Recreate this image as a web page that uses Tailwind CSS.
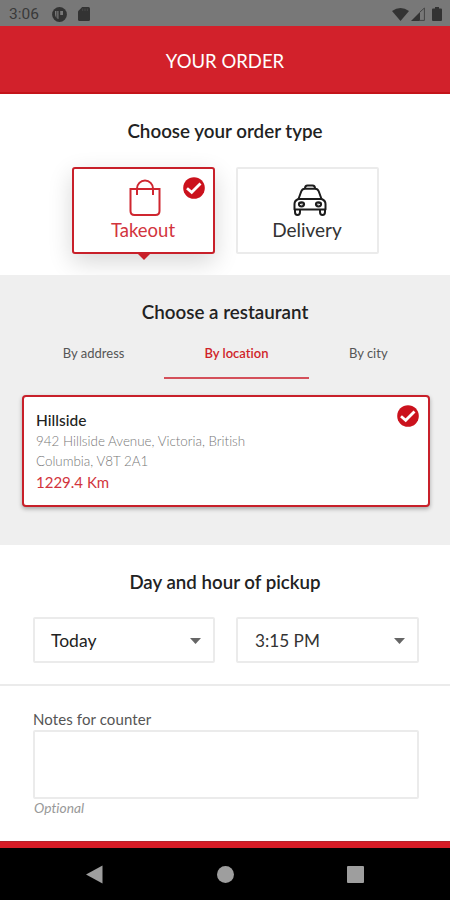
<!DOCTYPE html>
<html lang="en">
<head>
    <meta charset="UTF-8">
    <meta name="viewport" content="width=device-width, initial-scale=1.0">
    <title>Your order</title>
    <script src="https://cdn.jsdelivr.net/npm/@tailwindcss/browser@4"></script>
</head>
<body class="bg-white">

    <div class="w-[450px] h-[900px] flex flex-col overflow-hidden font-['Lato',sans-serif] text-[#222] [font-variant-ligatures:none]">

        <!-- status bar -->
        <div class="h-[26px] shrink-0 bg-[#787878] flex items-center pl-[9px] pr-[8px] pt-[2px] text-[#3a3a3a]">
            <span class="font-['Roboto',sans-serif] text-[15.5px] leading-none w-[43px] pt-[2px]">3:06</span>
            <svg class="w-[15px] h-[15px]" viewBox="0 0 15 15">
                <circle cx="7.5" cy="7.5" r="7.4" fill="#333"/>
                <path d="M3 4H6.500V12Q3 11 3 7ZM8.200 4H11V8H8.200Z" fill="#787878"/>
                <path d="M4.800 4V11" stroke="#333" stroke-width="0.800"/>
            </svg>
            <svg class="w-[12px] h-[14px] ml-[11px]" viewBox="0 0 12 14">
                <path d="M4.200 0H10.500Q12 0 12 1.500V12.500Q12 14 10.500 14H1.500Q0 14 0 12.500V4.200Z" fill="#333"/>
                <path d="M4.700 1.500v2.500M7 1.500v2.500M9.300 1.500v2.500" stroke="#484848" stroke-width="1"/>
            </svg>
            <svg class="w-[17px] h-[13px] ml-auto" viewBox="0 0 17 13">
                <path d="M0 3Q8.500-3 17 3L8.500 13Z" fill="#333"/>
            </svg>
            <svg class="w-[14px] h-[14px] ml-[2px]" viewBox="0 0 14 14">
                <path d="M0 14L9 5V14Z" fill="#333"/>
                <path d="M9 5L13.400 1V13.400H8" fill="none" stroke="#444" stroke-width="1"/>
            </svg>
            <svg class="w-[10px] h-[14px] ml-[7px]" viewBox="0 0 10 14">
                <path d="M3 0h4v1.500h2q1 0 1 1V13q0 1-1 1H1q-1 0-1-1V2.500q0-1 1-1h2z" fill="#333"/>
            </svg>
        </div>

        <header class="h-[68px] shrink-0 bg-[#d2212b] border-b-2 border-[#c4141a] flex items-center justify-center pt-[4px]">
            <h1 class="text-white text-[18.500px] leading-[20px]">YOUR ORDER</h1>
        </header>

        <!-- order type -->
        <section class="h-[181px] shrink-0 pt-[25px] overflow-hidden">
            <h2 class="text-center text-[18.800px] leading-[24px] font-semibold">Choose your order type</h2>
            <div class="flex justify-center gap-[21px] mt-[24px]">
                <button class="relative w-[143px] h-[87px] bg-white border-2 border-[#c8202a] rounded-[3px] shadow-[0_8px_24px_rgba(0,0,0,0.16)] flex flex-col items-center pt-[10px] text-[#d2343d]">
                    <svg class="w-[32px] h-[37px] ml-[3px]" viewBox="0 0 32 37" fill="none" stroke="#cf2630" stroke-width="2">
                        <path d="M1.500 10H30.500V32q0 4-4 4H5.500q-4 0-4-4Z"/>
                        <path d="M8 16V9.500a8 8 0 0 1 16 0V16"/>
                    </svg>
                    <span class="text-[18.500px] leading-[24px] mt-[2px]">Takeout</span>
                    <svg class="absolute right-[8px] top-[8px] w-[22px] h-[22px]" viewBox="0 0 22 22">
                        <circle cx="11" cy="11" r="10.800" fill="#cb121d"/>
                        <path d="M4 11.200L8.700 15.300L17.500 6.500" fill="none" stroke="#fff" stroke-width="2.800"/>
                    </svg>
                    <svg class="absolute left-[63px] top-[84px] w-[14px] h-[7px]" viewBox="0 0 14 7">
                        <path d="M0 0H14L7 7Z" fill="#c8202a"/>
                    </svg>
                </button>
                <button class="w-[143px] h-[87px] bg-white border-2 border-[#ebebeb] rounded-[2px] flex flex-col items-center pt-[15px]">
                    <svg class="w-[34px] h-[32px] ml-[6px]" viewBox="0 0 34 32" fill="none" stroke="#1c1c1c" stroke-width="2" stroke-linejoin="round">
                        <path d="M12 4.500Q12 1.500 14.500 1.500H19.500Q22 1.500 22 4.500"/>
                        <path d="M5.500 15L8.200 7.500Q9.200 4.800 12 4.800H22Q24.800 4.800 25.800 7.500L28.500 15Z"/>
                        <path d="M5.500 15Q1.500 16.500 1.500 20V25.500H32.500V20Q32.500 16.500 28.500 15"/>
                        <path d="M2 25.500V28Q2 31 4.500 31T7 28V25.500M27 25.500V28Q27 31 29.500 31T32 28V25.500"/>
                        <ellipse cx="8.500" cy="20.300" rx="2.600" ry="2.100"/>
                        <ellipse cx="25.500" cy="20.300" rx="2.600" ry="2.100"/>
                        <path d="M5.500 19L11.500 20.500M28.500 19L22.500 20.500" stroke-width="0.800"/>
                    </svg>
                    <span class="text-[19px] leading-[24px] mt-[2px] text-[#333]">Delivery</span>
                </button>
            </div>
        </section>

        <!-- restaurant -->
        <section class="h-[270px] shrink-0 bg-[#efefef] px-[22px] pt-[25px]">
            <h2 class="text-center text-[18.800px] leading-[24px] font-semibold">Choose a restaurant</h2>
            <div class="flex text-[13px] leading-[18px] text-[#555] mt-[20px] h-[35px] pl-px">
                <div class="w-[142px] text-center">By address</div>
                <div class="w-[145px] text-center text-[#cf1f29] font-semibold border-b-2 border-[#d4505a]">By location</div>
                <div class="w-[120px] text-center">By city</div>
            </div>
            <div class="relative h-[112px] mt-[16px] mr-[-2px] bg-white border-2 border-[#c8202a] rounded-[4px] shadow-[0_2px_4px_rgba(0,0,0,0.3)] pl-[12px] pt-[12px]">
                <h3 class="text-[15.500px] leading-[22px] font-medium">Hillside</h3>
                <p class="w-[230px] text-[13.400px] leading-[20px] font-light text-[#777]">942 Hillside Avenue, Victoria, British Columbia, V8T 2A1</p>
                <p class="text-[15px] leading-[22px] text-[#d2343d]">1229.4 Km</p>
                <svg class="absolute right-[9px] top-[8px] w-[22px] h-[22px]" viewBox="0 0 22 22">
                    <circle cx="11" cy="11" r="10.800" fill="#cb121d"/>
                    <path d="M4 11.200L8.700 15.300L17.500 6.500" fill="none" stroke="#fff" stroke-width="2.800"/>
                </svg>
            </div>
        </section>

        <!-- pickup -->
        <section class="h-[141px] shrink-0 px-[33px] pt-[25px] border-b-2 border-[#ebebeb]">
            <h2 class="text-center text-[18.700px] leading-[24px] font-semibold">Day and hour of pickup</h2>
            <div class="flex gap-[21px] mt-[23px] mr-[-2px]">
                <div class="w-[182px] h-[46px] border-2 border-[#ebebeb] rounded-[2px] flex items-center justify-between pl-[16px] pr-[12px] pt-[2px] text-[17.500px]">
                    Today
                    <svg class="w-[11px] h-[6px]" viewBox="0 0 11 6"><path d="M0 0H11L5.500 6Z" fill="#666"/></svg>
                </div>
                <div class="w-[183px] h-[46px] border-2 border-[#ebebeb] rounded-[2px] flex items-center justify-between pl-[17px] pr-[12px] pt-[2px] text-[17.200px] text-[#333]">
                    3:15 PM
                    <svg class="w-[11px] h-[6px]" viewBox="0 0 11 6"><path d="M0 0H11L5.500 6Z" fill="#666"/></svg>
                </div>
            </div>
        </section>

        <!-- notes -->
        <section class="h-[155px] shrink-0 pl-[33px] pr-[31px] pt-[23px]">
            <label class="block text-[15px] leading-[20px] tracking-[0.1px] text-[#555]" for="notes">Notes for counter</label>
            <textarea class="block w-full h-[69px] mt-[1px] border-2 border-[#ebebeb] rounded-[2px] resize-none" id="notes"></textarea>
            <p class="text-[13.800px] leading-[18px] italic text-[#999] pl-[1px]">Optional</p>
        </section>

        <div class="h-[7px] shrink-0 bg-[#d71c26] border-t border-[#b5222a]"></div>

        <!-- android navigation -->
        <nav class="h-[52px] shrink-0 bg-black flex items-center justify-between pl-[86px] pr-[86px]">
            <svg class="w-[17px] h-[19px]" viewBox="0 0 17 19"><path d="M0 9.500L16.500 0.500V18.500Z" fill="#9e9e9e"/></svg>
            <div class="w-[17px] h-[17px] rounded-full bg-[#9e9e9e]"></div>
            <div class="w-[17px] h-[17px] rounded-[1px] bg-[#9e9e9e]"></div>
        </nav>
    </div>

</body>
</html>
